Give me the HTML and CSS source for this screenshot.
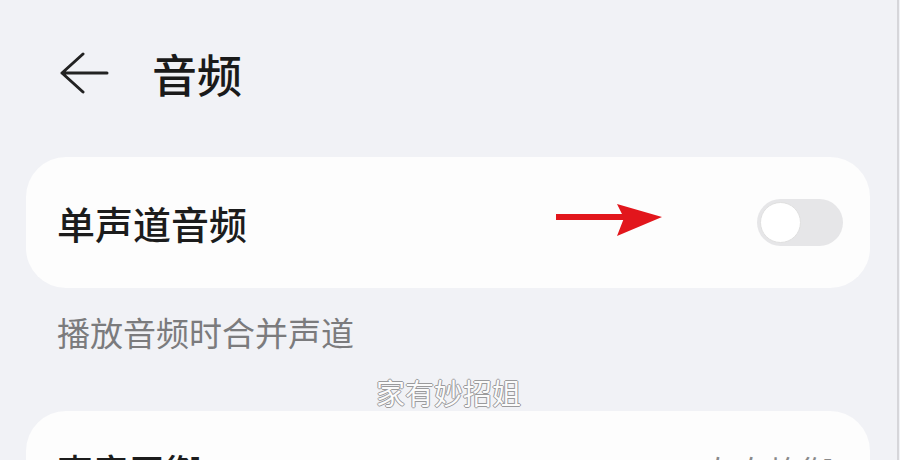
FILE: index.html
```html
<!DOCTYPE html>
<html lang="zh-CN">
<head>
    <meta charset="UTF-8">
    <meta name="viewport" content="width=device-width, initial-scale=1.0">
    <title>音频</title>
    <link rel="stylesheet" href="styles.css">
</head>
<body>
    <div id="screen">
        <div class="header">
            <svg class="back" width="50" height="42" viewBox="0 0 50 42">
                <path d="M24 2 L3 21 L24 40 M3 21 H48" fill="none" stroke="#222" stroke-width="3" stroke-linecap="round" stroke-linejoin="round"/>
            </svg>
            <h1 class="title">音频</h1>
        </div>

        <div class="card">
            <span class="label">单声道音频</span>
            <svg class="pointer" width="108" height="34" viewBox="0 0 108 34">
                <rect x="0" y="10" width="70" height="6" fill="#e2161c"/>
                <polygon points="61,0 106,13 61,32 68,14" fill="#e2161c"/>
            </svg>
            <div class="toggle"><div class="knob"></div></div>
        </div>

        <p class="hint">播放音频时合并声道</p>
        <div class="mark">家有妙招姐</div>

        <div class="card card-next">
            <span class="label">声音平衡</span>
            <span class="value">左右均衡</span>
        </div>
    </div>
</body>
</html>
```

FILE: styles.css
```css
body {
    margin: 0;
    background-color: #f1f2f6;
    font-family: "Noto Sans CJK SC", "Noto Sans", sans-serif;
    overflow: hidden;
}
#screen {
    width: 897px;
    height: 460px;
    border-right: 2px solid #d6d6da;
    overflow: hidden;
}
.header {
    height: 147px;
    display: flex;
    align-items: center;
    padding-left: 59px;
}
.back {
    display: block;
    margin-top: -1px;
}
.title {
    margin: 0 0 0 43px;
    font-size: 45px;
    font-weight: 500;
    line-height: 52px;
    color: #1a1a1a;
}
.card {
    margin: 10px 27px 0 26px;
    height: 131px;
    background-color: #fdfdfd;
    border-radius: 40px;
    display: flex;
    align-items: center;
    padding: 0 27px 0 31px;
}
.label {
    font-size: 38px;
    font-weight: 500;
    line-height: 44px;
    color: #1c1c1c;
}
.pointer {
    display: block;
    margin-left: auto;
    margin-right: 93px;
    margin-top: -4px;
}
.toggle {
    width: 86px;
    height: 47px;
    border-radius: 24px;
    background-color: #e6e6e8;
    display: flex;
    align-items: center;
    padding-left: 3px;
    box-sizing: border-box;
}
.knob {
    width: 39px;
    height: 39px;
    border-radius: 50%;
    background-color: #fff;
    border: 1px solid #e0e0e0;
}
.hint {
    margin: 24px 0 0 57px;
    font-size: 33px;
    line-height: 40px;
    color: #7b7b7d;
}
.mark {
    margin-top: 22px;
    text-align: center;
    font-size: 29px;
    line-height: 36px;
    color: #fbfbfb;
    text-shadow: -1px 0 #9a9a9c, 1px 0 #9a9a9c, 0 -1px #9a9a9c, 0 1px #9a9a9c;
}
.card-next {
    margin-top: 1px;
    align-items: flex-start;
    padding-top: 37px;
    box-sizing: border-box;
}
.card-next .label {
    font-size: 36px;
}
.card-next .value {
    margin-left: auto;
    font-size: 32px;
    line-height: 44px;
    color: #8a8a8a;
    padding-right: 10px;
}
```
